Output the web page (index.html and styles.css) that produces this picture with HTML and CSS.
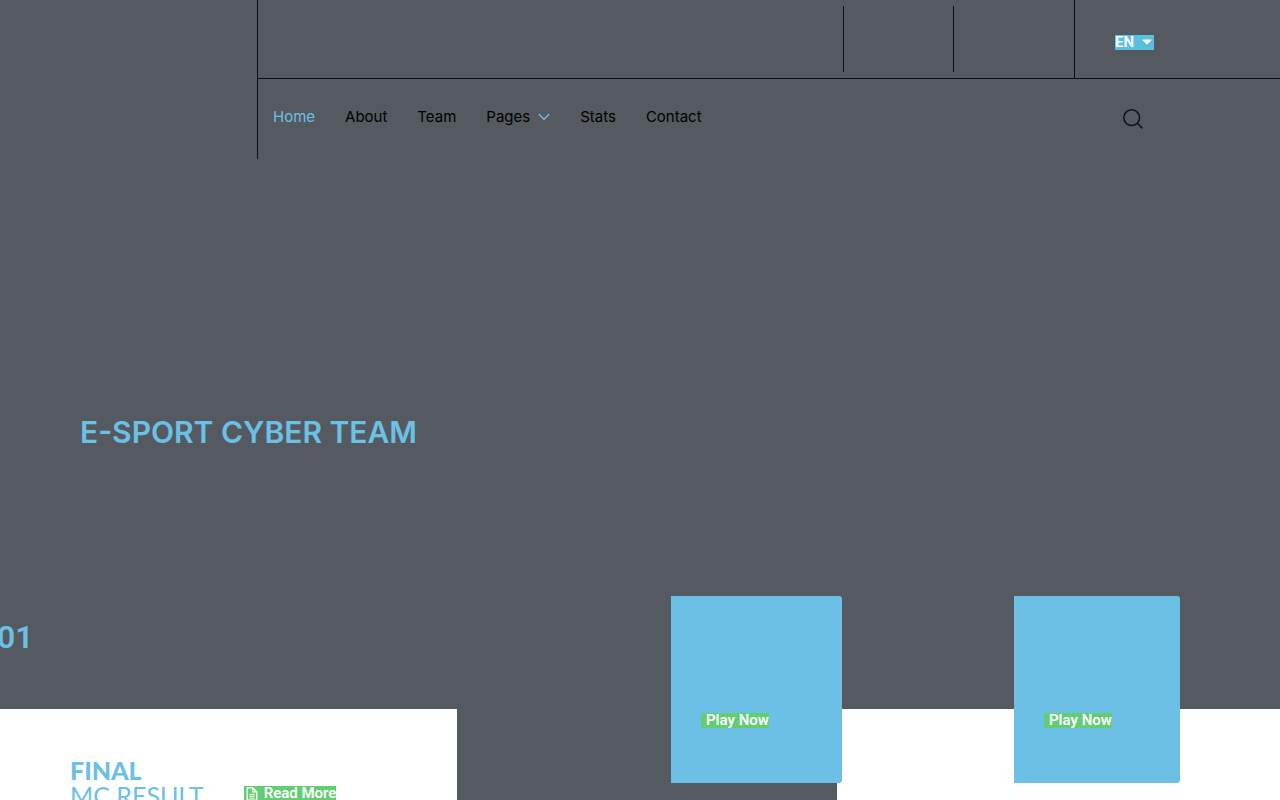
FILE: index.html
```html
<!DOCTYPE html>
<html lang="en">
<head>
<meta charset="utf-8">
<title>E-Sport Cyber Team</title>
<link rel="stylesheet" href="styles.css">
</head>
<body>
<header class="header">
  <div class="header-main">
    <div class="topbar">
      <div class="topbar-cell"></div>
      <div class="topbar-cell"></div>
      <div class="topbar-lang">
        <button class="tag tag-blue" type="button">EN
          <svg class="caret" viewBox="0 0 10 6" aria-hidden="true"><path d="M1 .5h8q.8 0 .3.7L5.7 5q-.7.7-1.4 0L.7 1.2Q.2.5 1 .5z" fill="currentColor"/></svg>
        </button>
      </div>
    </div>
    <div class="navbar">
      <nav class="nav">
        <a class="active" href="#">Home</a>
        <a href="#">About</a>
        <a href="#">Team</a>
        <a href="#">Pages
          <svg class="chevron" viewBox="0 0 12 8" aria-hidden="true"><path d="M.7 1 6 6.3 11.3 1" fill="none" stroke="currentColor" stroke-width="1.4"/></svg>
        </a>
        <a href="#">Stats</a>
        <a href="#">Contact</a>
      </nav>
      <button class="search" type="button" aria-label="Search">
        <svg viewBox="0 0 20 20" aria-hidden="true"><g fill="none" stroke="currentColor" stroke-width="1.5"><circle cx="8.7" cy="8.7" r="7.9"/><path d="m14.2 14.2 5.2 5.2"/></g></svg>
      </button>
    </div>
  </div>
</header>
<main>
  <section class="hero">
    <h1 class="hero-title">E-SPORT CYBER TEAM</h1>
    <div class="slide-number">01</div>
  </section>
  <section class="results">
    <div class="result-panel">
      <h2 class="result-title"><strong>FINAL</strong><br>MC RESULT</h2>
      <a class="tag tag-green read-more" href="#"><svg class="doc" viewBox="0 0 12 14" aria-hidden="true"><path d="M1.2.8h5.6l4 4v8.4H1.2z M6.8.8v4h4" fill="none" stroke="currentColor" stroke-width="1.3"/><path d="M3.3 7.3h5.4M3.3 9.2h5.4M3.3 11.1h5.4" stroke="currentColor"/></svg>Read More</a>
    </div>
    <div class="side-panel"></div>
    <div class="cards">
      <article class="card card-wide"><a class="tag tag-green play" href="#">Play Now</a></article>
      <article class="card"><a class="tag tag-green play" href="#">Play Now</a></article>
    </div>
  </section>
</main>
</body>
</html>
```
FILE: styles.css
```css
* {
  box-sizing: border-box;
}

body {
  display: flex;
  flex-direction: column;
  height: 100vh;
  margin: 0;
  overflow: hidden;
  background: #555a60;
  color: #000;
  font-family: Inter, "Liberation Sans", sans-serif;
}

a {
  color: inherit;
  text-decoration: none;
}

button {
  border: 0;
  background: none;
  cursor: pointer;
}

.header {
  padding-left: 257px;
}

.header-main {
  border-left: 1px solid #0b0d10;
}

.topbar {
  display: flex;
  justify-content: flex-end;
  height: 79px;
  border-bottom: 1px solid #0b0d10;
}

.topbar-cell {
  width: 110px;
  margin: 6px 0;
  border-left: 1px solid #0b0d10;
}

.topbar-cell + .topbar-cell {
  width: 121px;
}

.topbar-lang {
  display: flex;
  align-items: center;
  width: 206px;
  padding: 6px 0 0 40px;
  border-left: 1px solid #0b0d10;
}

.tag {
  display: inline-flex;
  align-items: center;
  height: 15px;
  padding: 0;
  color: #fff;
  font: 600 15px/15px Roboto, "Liberation Sans", sans-serif;
  white-space: nowrap;
}

.tag-blue {
  gap: 8px;
  padding-right: 2px;
  background: #5bc0de;
}

.tag-green {
  background: #62cd73;
}

.caret {
  width: 10px;
  height: 6px;
}

.navbar {
  display: flex;
  align-items: center;
  justify-content: space-between;
  height: 80px;
  padding: 0 137px 0 15px;
}

.nav {
  display: flex;
  gap: 30px;
  padding-bottom: 4px;
  font-size: 15px;
  line-height: 20px;
}

.nav a {
  display: flex;
  align-items: center;
  gap: 8px;
}

.nav .active,
.chevron {
  color: #6dc0e5;
}

.chevron {
  width: 12px;
  height: 8px;
}

.search {
  padding: 0;
  color: #101418;
}

.search svg {
  display: block;
  width: 20px;
  height: 20px;
}

main {
  display: contents;
}

.hero {
  height: 550px;
  flex-shrink: 0;
  color: #6dc0e5;
}

.hero-title {
  margin: 0;
  padding: 253px 80px 0;
  font-size: 30px;
  font-weight: 600;
  line-height: 40px;
}

.slide-number {
  margin: 165px 0 0 -3px;
  font: 600 32px/40px Roboto, sans-serif;
}

.results {
  position: relative;
  display: flex;
  flex: 1;
  justify-content: space-between;
}

.result-panel {
  display: flex;
  align-items: flex-start;
  gap: 40px;
  width: 457px;
  padding: 49px 0 0 70px;
  background: #fff;
}

.result-title {
  margin: 0;
  color: #6dc0e5;
  font: 400 25px/25px Lato, sans-serif;
}

.result-title strong {
  font-weight: 900;
}

.read-more {
  gap: 6px;
  margin-top: 28px;
  padding-left: 2px;
}

.doc {
  width: 12px;
  height: 14px;
}

.side-panel {
  width: 443px;
  background: #fff;
}

.cards {
  position: absolute;
  top: -113px;
  right: 100px;
  display: flex;
  gap: 172px;
}

.card {
  width: 166px;
  height: 187px;
  padding: 113px 30px 0;
  border-radius: 0 3px 3px 0;
  background: #6dc0e5;
}

.card-wide {
  width: 171px;
}

.play {
  padding-left: 5px;
}
```
